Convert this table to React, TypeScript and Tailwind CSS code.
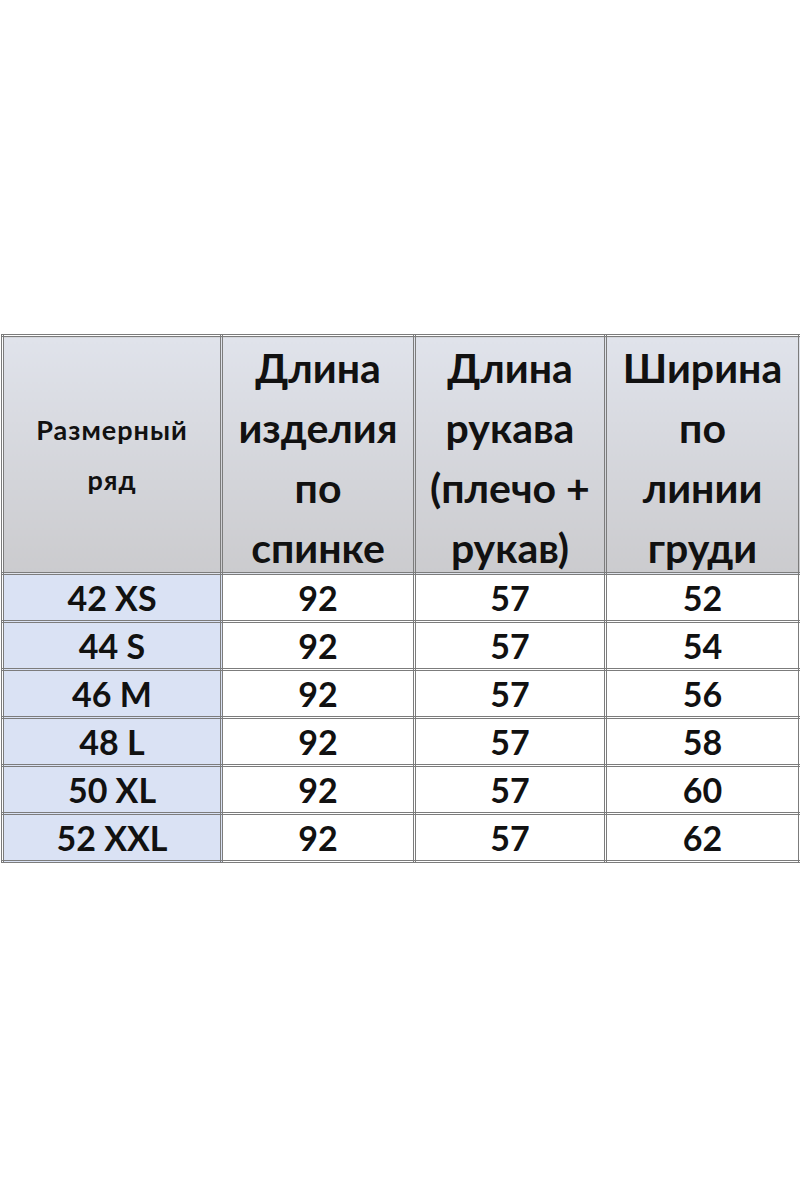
import React from 'react';

const headers = [
  ['Длина', 'изделия', 'по', 'спинке'],
  ['Длина', 'рукава', '(плечо +', 'рукав)'],
  ['Ширина', 'по', 'линии', 'груди'],
];

const rows = [
  ['42 XS', '92', '57', '52'],
  ['44 S', '92', '57', '54'],
  ['46 M', '92', '57', '56'],
  ['48 L', '92', '57', '58'],
  ['50 XL', '92', '57', '60'],
  ['52 XXL', '92', '57', '62'],
];

const cellBorder = 'border-[3px] border-double border-[#7c7c7c]';

export default function App() {
  return (
    <div
      className="w-[800px] h-[1200px] bg-white pt-[334px] pl-[1px] text-[#111]"
      style={{ fontFamily: 'Lato, "Noto Sans", "Open Sans", sans-serif' }}
    >
      <table className="border-collapse table-fixed w-[797px]">
        <colgroup>
          <col className="w-[219px]" />
          <col className="w-[193px]" />
          <col className="w-[191px]" />
          <col className="w-[194px]" />
        </colgroup>
        <thead>
          <tr className="h-[238px]">
            <th
              className={`${cellBorder} bg-gradient-to-b from-[#e0e3eb] to-[#cbcbce] text-[27px] tracking-[1px] leading-[50px] font-bold align-middle p-0`}
            >
              <div>Размерный</div>
              <div>ряд</div>
            </th>
            {headers.map((lines, i) => (
              <th
                key={i}
                className={`${cellBorder} bg-gradient-to-b from-[#e0e3eb] to-[#cbcbce] text-[41px] leading-[60px] font-bold align-middle p-0`}
              >
                <div className="-mb-[6px]">
                  {lines.map((l, j) => (
                    <div key={j}>{l}</div>
                  ))}
                </div>
              </th>
            ))}
          </tr>
        </thead>
        <tbody>
          {rows.map((r, i) => (
            <tr key={i} className="h-[48px]">
              {r.map((v, j) => (
                <td
                  key={j}
                  className={`${cellBorder} ${j === 0 ? 'bg-[#dae2f4]' : 'bg-white'} text-center text-[34px] leading-[42px] font-bold p-0`}
                >
                  {v}
                </td>
              ))}
            </tr>
          ))}
        </tbody>
      </table>
    </div>
  );
}
